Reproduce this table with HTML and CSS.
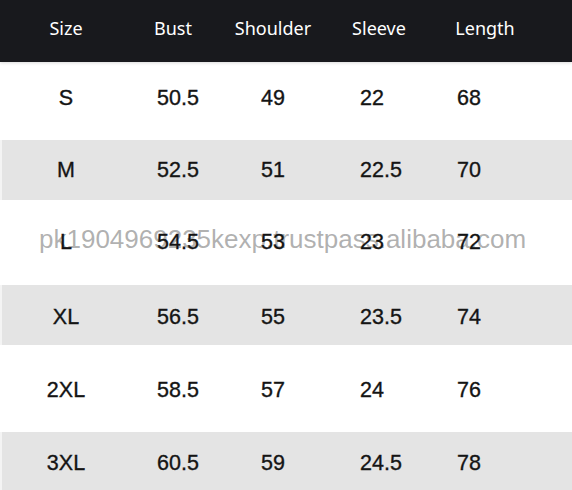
FILE: index.html
```html
<!DOCTYPE html>
<html>
<head>
<meta charset="utf-8">
<link rel="stylesheet" href="styles.css">
</head>
<body>
<div class="table">
  <div class="row head">
    <div class="hc">Size</div>
    <div class="hc">Bust</div>
    <div class="hc">Shoulder</div>
    <div class="hc">Sleeve</div>
    <div class="hc">Length</div>
  </div>
  <div class="row r-s">
    <div class="c size">S</div><div class="c bust">50.5</div><div class="c sh">49</div><div class="c sl">22</div><div class="c len">68</div>
  </div>
  <div class="row r-m gray">
    <div class="c size">M</div><div class="c bust">52.5</div><div class="c sh">51</div><div class="c sl">22.5</div><div class="c len">70</div>
  </div>
  <div class="row r-l wm-row">
    <div class="watermark">pk1904969235kexp.trustpass.alibaba.com</div>
    <div class="c size">L</div><div class="c bust">54.5</div><div class="c sh">53</div><div class="c sl">23</div><div class="c len">72</div>
  </div>
  <div class="row r-xl gray">
    <div class="c size">XL</div><div class="c bust">56.5</div><div class="c sh">55</div><div class="c sl">23.5</div><div class="c len">74</div>
  </div>
  <div class="row r-2xl">
    <div class="c size">2XL</div><div class="c bust">58.5</div><div class="c sh">57</div><div class="c sl">24</div><div class="c len">76</div>
  </div>
  <div class="row r-3xl gray">
    <div class="c size">3XL</div><div class="c bust">60.5</div><div class="c sh">59</div><div class="c sl">24.5</div><div class="c len">78</div>
  </div>
</div>
</body>
</html>
```

FILE: styles.css
```css
html, body {
  margin: 0;
  padding: 0;
  background: #ffffff;
}
.table {
  width: 572px;
  height: 490px;
  overflow: hidden;
}
.row {
  display: grid;
  grid-template-columns: 132px 82px 118px 94px 118px 28px;
  align-items: center;
  position: relative;
}
.head {
  height: 62px;
  background: #18191d;
  box-shadow: 0 1px 3px rgba(0,0,0,0.15);
  position: relative;
  z-index: 1;
}
.hc {
  color: #ffffff;
  font-family: "Noto Sans", "Open Sans", sans-serif;
  font-size: 18px;
  text-align: center;
  padding-bottom: 6px;
}
.gray {
  background: #e4e4e4;
  box-shadow: inset 2px 0 0 #f4f4f4;
}
.r-s { height: 78px; }
.r-m { height: 60px; }
.r-l { height: 85px; }
.r-xl { height: 60px; }
.r-2xl { height: 87px; }
.r-3xl { height: 58px; }
.r-s .c { padding-bottom: 6px; }
.r-xl .c, .r-3xl .c { padding-top: 5px; }
.r-2xl .c { padding-top: 3px; }
.c {
  font-family: "Liberation Sans", Arial, sans-serif;
  font-size: 21.5px;
  color: #141414;
  -webkit-text-stroke: 0.35px #141414;
  position: relative;
}
.size { text-align: center; }
.bust { padding-left: 25px; }
.sh { padding-left: 47px; }
.sl { padding-left: 28px; }
.len { padding-left: 31px; }
.watermark {
  position: absolute;
  left: 39px;
  top: 24px;
  font-family: "Liberation Sans", Arial, sans-serif;
  font-size: 26px;
  color: rgba(110,110,110,0.55);
  white-space: nowrap;
  pointer-events: none;
}
```
